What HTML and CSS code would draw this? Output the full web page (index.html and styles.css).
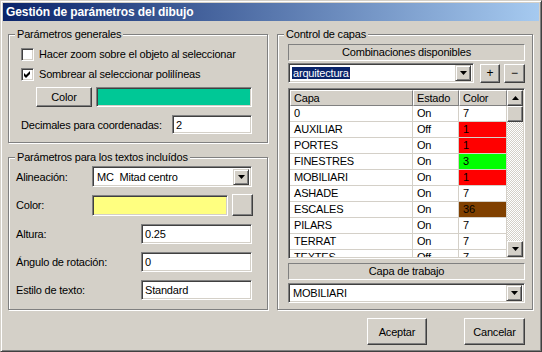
FILE: index.html
```html
<!DOCTYPE html>
<html lang="es">

<head>
    <meta charset="UTF-8">
    <title>Gestión de parámetros del dibujo</title>
    <link rel="stylesheet" href="styles.css">
</head>

<body>
    <div class="ventana">
        <div class="titulo">Gestión de parámetros del dibujo</div>

        <div class="contenido">
            <div class="columna-izq">
                <fieldset class="grupo grupo-generales">
                    <legend>Parámetros generales</legend>
                    <div class="interior">
                        <label class="check"><span class="caja"></span>Hacer zoom sobre el objeto al seleccionar</label>
                        <label class="check"><span class="caja"><svg width="7" height="7" viewBox="0 0 7 7"><polygon points="0,2 2,4 6,0 6,3 2,7 0,5" fill="#000"/></svg></span>Sombrear al seleccionar polilíneas</label>
                        <div class="fila-color">
                            <button class="boton btn-color">Color</button>
                            <div class="campo muestra-verde"></div>
                        </div>
                        <div class="fila-decimales">
                            <span class="etiqueta-dec">Decimales para coordenadas:</span>
                            <div class="campo entrada entrada-dec">2</div>
                        </div>
                    </div>
                </fieldset>

                <fieldset class="grupo grupo-textos">
                    <legend>Parámetros para los textos incluídos</legend>
                    <div class="interior">
                        <div class="fila fila-alineacion">
                            <span class="etiqueta">Alineación:</span>
                            <div class="campo combo combo-alineacion">
                                <span class="combo-texto">MC&nbsp; Mitad centro</span>
                                <span class="flecha"><svg width="7" height="4" viewBox="0 0 7 4"><polygon points="0,0 7,0 3.5,4" fill="#000"/></svg></span>
                            </div>
                        </div>
                        <div class="fila fila-amarillo">
                            <span class="etiqueta">Color:</span>
                            <div class="campo muestra-amarilla"></div>
                            <button class="boton btn-mini"></button>
                        </div>
                        <div class="fila fila-texto">
                            <span class="etiqueta etiqueta-larga">Altura:</span>
                            <div class="campo entrada entrada-larga">0.25</div>
                        </div>
                        <div class="fila fila-texto">
                            <span class="etiqueta etiqueta-larga">Ángulo de rotación:</span>
                            <div class="campo entrada entrada-larga">0</div>
                        </div>
                        <div class="fila fila-texto">
                            <span class="etiqueta etiqueta-larga">Estilo de texto:</span>
                            <div class="campo entrada entrada-larga">Standard</div>
                        </div>
                    </div>
                </fieldset>
            </div>

            <div class="columna-der">
                <fieldset class="grupo grupo-capas">
                    <legend>Control de capas</legend>
                    <div class="interior">
                        <div class="rotulo">Combinaciones disponibles</div>

                        <div class="fila-combinaciones">
                            <div class="campo combo combo-comb">
                                <span class="combo-texto"><span class="seleccion">arquitectura</span></span>
                                <span class="flecha"><svg width="7" height="4" viewBox="0 0 7 4"><polygon points="0,0 7,0 3.5,4" fill="#000"/></svg></span>
                            </div>
                            <button class="boton btn-signo btn-mas">+</button>
                            <button class="boton btn-signo btn-menos">&minus;</button>
                        </div>

                        <div class="campo tabla">
                            <div class="rejilla">
                                <div class="fila-tabla cabecera">
                                    <span class="col-capa">Capa</span>
                                    <span class="col-estado">Estado</span>
                                    <span class="col-color">Color</span>
                                </div>
                                <div class="fila-tabla"><span class="col-capa">0</span><span class="col-estado">On</span><span class="col-color">7</span></div>
                                <div class="fila-tabla"><span class="col-capa">AUXILIAR</span><span class="col-estado">Off</span><span class="col-color rojo">1</span></div>
                                <div class="fila-tabla"><span class="col-capa">PORTES</span><span class="col-estado">On</span><span class="col-color rojo">1</span></div>
                                <div class="fila-tabla"><span class="col-capa">FINESTRES</span><span class="col-estado">On</span><span class="col-color verde">3</span></div>
                                <div class="fila-tabla"><span class="col-capa">MOBILIARI</span><span class="col-estado">On</span><span class="col-color rojo">1</span></div>
                                <div class="fila-tabla"><span class="col-capa">ASHADE</span><span class="col-estado">On</span><span class="col-color">7</span></div>
                                <div class="fila-tabla"><span class="col-capa">ESCALES</span><span class="col-estado">On</span><span class="col-color marron">36</span></div>
                                <div class="fila-tabla"><span class="col-capa">PILARS</span><span class="col-estado">On</span><span class="col-color">7</span></div>
                                <div class="fila-tabla"><span class="col-capa">TERRAT</span><span class="col-estado">On</span><span class="col-color">7</span></div>
                                <div class="fila-tabla"><span class="col-capa">TEXTES</span><span class="col-estado">Off</span><span class="col-color">7</span></div>
                            </div>
                            <div class="scroll">
                                <span class="boton scroll-btn"><svg width="7" height="4" viewBox="0 0 7 4"><polygon points="3.5,0 7,4 0,4" fill="#000"/></svg></span>
                                <span class="boton scroll-thumb"></span>
                                <span class="scroll-pista"></span>
                                <span class="boton scroll-btn"><svg width="7" height="4" viewBox="0 0 7 4"><polygon points="0,0 7,0 3.5,4" fill="#000"/></svg></span>
                            </div>
                        </div>

                        <div class="rotulo rotulo-trabajo">Capa de trabajo</div>

                        <div class="campo combo combo-trabajo">
                            <span class="combo-texto">MOBILIARI</span>
                            <span class="flecha"><svg width="7" height="4" viewBox="0 0 7 4"><polygon points="0,0 7,0 3.5,4" fill="#000"/></svg></span>
                        </div>
                    </div>
                </fieldset>

                <div class="botonera">
                    <button class="boton btn-dialogo btn-aceptar">Aceptar</button>
                    <button class="boton btn-dialogo btn-cancelar">Cancelar</button>
                </div>
            </div>
        </div>
    </div>
</body>

</html>
```

FILE: styles.css
```css
* {
    margin: 0;
    padding: 0;
    box-sizing: border-box;
}

body {
    background: #d4d0c8;
    font-family: "Liberation Sans", Arial, sans-serif;
    font-size: 11px;
    letter-spacing: -0.2px;
    color: #000;
}

/* marco de la ventana */
.ventana {
    width: 542px;
    height: 352px;
    padding: 2px;
    background: #d4d0c8;
    border: 1px solid;
    border-color: #d4d0c8 #404040 #404040 #d4d0c8;
    box-shadow: inset 1px 1px 0 #fff, inset -1px -1px 0 #808080;
}

.titulo {
    height: 18px;
    line-height: 18px;
    padding-left: 3px;
    background: linear-gradient(to right, #0a246a, #a6caf0);
    color: #fff;
    font-weight: bold;
    font-size: 12px;
    letter-spacing: -0.1px;
}

.contenido {
    display: flex;
    gap: 9px;
    padding-left: 5px;
}

.columna-izq,
.columna-der {
    display: flex;
    flex-direction: column;
}

/* grupos */
.grupo {
    border: 1px solid #808080;
    box-shadow: inset 1px 1px 0 #fff, 1px 1px 0 #fff;
    min-width: 0;
}

.grupo legend {
    margin-left: 6px;
    padding: 0 2px;
    line-height: 14px;
    background: #d4d0c8;
}

.grupo-generales {
    width: 260px;
    height: 116px;
    margin-top: 6px;
}

.grupo-textos {
    width: 260px;
    height: 160px;
    margin-top: 7px;
}

.grupo-capas {
    width: 256px;
    height: 283px;
    margin-top: 6px;
}

/* controles comunes */
.campo {
    background: #fff;
    border: 1px solid;
    border-color: #808080 #fff #fff #808080;
    box-shadow: inset 1px 1px 0 #404040, inset -1px -1px 0 #d4d0c8;
}

.boton {
    background: #d4d0c8;
    border: 1px solid;
    border-color: #fff #404040 #404040 #fff;
    box-shadow: inset -1px -1px 0 #808080;
    font-family: inherit;
    font-size: 11px;
    letter-spacing: inherit;
    color: #000;
}

.entrada {
    padding: 0 3px;
    display: flex;
    align-items: center;
}

.combo {
    display: flex;
    align-items: center;
    padding: 2px;
}

.combo-texto {
    flex: 1;
    padding-left: 2px;
}

.flecha {
    width: 16px;
    height: 16px;
    display: flex;
    align-items: center;
    justify-content: center;
    background: #d4d0c8;
    border: 1px solid;
    border-color: #d4d0c8 #404040 #404040 #d4d0c8;
    box-shadow: inset 1px 1px 0 #fff, inset -1px -1px 0 #808080;
}

/* parámetros generales */
.grupo-generales .interior {
    padding-left: 12px;
}

.check {
    display: flex;
    align-items: center;
    gap: 5px;
    height: 20px;
}

.check:first-child {
    margin-top: 3px;
}

.caja {
    width: 13px;
    height: 13px;
    display: flex;
    align-items: center;
    justify-content: center;
    background: #fff;
    border: 1px solid;
    border-color: #808080 #fff #fff #808080;
    box-shadow: inset 1px 1px 0 #404040, inset -1px -1px 0 #d4d0c8;
}

.fila-color {
    display: flex;
    gap: 4px;
    margin: 3px 0 0 15px;
}

.btn-color {
    width: 56px;
    height: 20px;
}

.muestra-verde {
    width: 156px;
    height: 20px;
    background: #00c896;
}

.fila-decimales {
    display: flex;
    align-items: center;
    margin-top: 8px;
}

.etiqueta-dec {
    width: 151px;
}

.entrada-dec {
    width: 80px;
    height: 19px;
}

/* parámetros de textos */
.grupo-textos .interior {
    padding-left: 7px;
}

.fila {
    display: flex;
    align-items: center;
}

.etiqueta {
    width: 76px;
}

.etiqueta-larga {
    width: 125px;
}

.fila-alineacion {
    margin-top: 2px;
}

.combo-alineacion {
    width: 160px;
    height: 21px;
}

.fila-amarillo {
    margin-top: 7px;
}

.muestra-amarilla {
    width: 136px;
    height: 21px;
    background: #ffff80;
}

.btn-mini {
    width: 21px;
    height: 22px;
    margin-left: 4px;
}

.fila-texto {
    margin-top: 8px;
}

.entrada-larga {
    width: 111px;
    height: 20px;
}

/* control de capas */
.grupo-capas .interior {
    padding: 0 7px 0 10px;
}

.rotulo {
    height: 17px;
    line-height: 15px;
    text-align: center;
    border: 1px solid;
    border-color: #808080 #fff #fff #808080;
    margin-top: 3px;
}

.fila-combinaciones {
    display: flex;
    align-items: center;
    margin-top: 2px;
    height: 20px;
}

.combo-comb {
    width: 186px;
    height: 20px;
}

.seleccion {
    background: #0a246a;
    color: #fff;
    padding: 0 1px;
    margin-left: -1px;
}

.btn-signo {
    width: 20px;
    height: 19px;
    font-size: 12px;
}

.btn-mas {
    margin-left: 6px;
}

.btn-menos {
    margin-left: 4px;
    width: 21px;
}

.tabla {
    display: flex;
    height: 171px;
    margin-top: 5px;
    padding: 1px;
    overflow: hidden;
}

.rejilla {
    width: 217px;
    overflow: hidden;
}

.fila-tabla {
    display: flex;
    height: 16px;
    line-height: 15px;
}

.fila-tabla span {
    border-right: 1px solid #d4d0c8;
    border-bottom: 1px solid #d4d0c8;
    padding-left: 4px;
}

.col-capa {
    width: 123px;
}

.col-estado {
    width: 46px;
}

.col-color {
    width: 48px;
}

.cabecera span {
    background: #d4d0c8;
    border: 1px solid;
    border-color: #fff #808080 #808080 #fff;
    padding-left: 3px;
    line-height: 14px;
}

.rojo {
    background: #ff0000;
}

.verde {
    background: #00ff00;
}

.marron {
    background: #804000;
}

.scroll {
    width: 16px;
    display: flex;
    flex-direction: column;
}

.scroll-btn {
    height: 16px;
    display: flex;
    align-items: center;
    justify-content: center;
}

.scroll-thumb {
    height: 16px;
}

.scroll-pista {
    flex: 1;
    background: repeating-conic-gradient(#fff 0 25%, #d4d0c8 0 50%) 0 0 / 2px 2px;
}

.rotulo-trabajo {
    margin-top: 4px;
}

.combo-trabajo {
    height: 20px;
    margin-top: 3px;
}

/* botones inferiores */
.botonera {
    display: flex;
    justify-content: flex-end;
    gap: 37px;
    margin-top: 8px;
    padding-right: 8px;
}

.btn-dialogo {
    height: 27px;
}

.btn-aceptar {
    width: 60px;
}

.btn-cancelar {
    width: 61px;
}
```
